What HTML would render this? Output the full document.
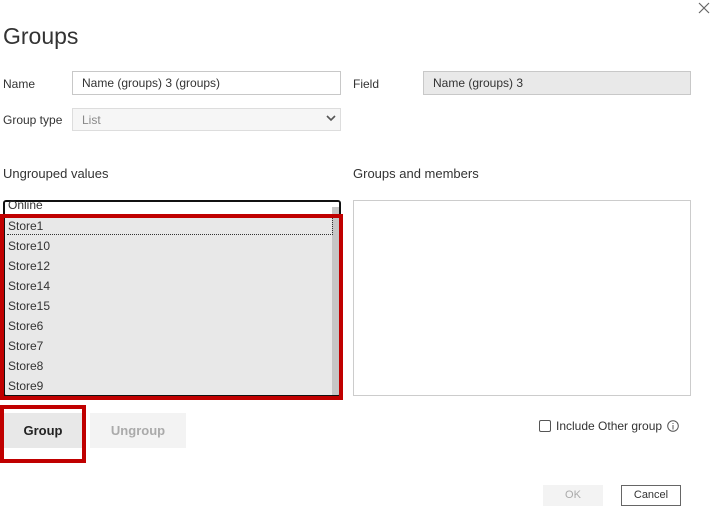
<!DOCTYPE html>
<html><head><style>
body{margin:0;width:711px;height:525px;background:#fff;font-family:"Liberation Sans",sans-serif;color:#333;position:relative;overflow:hidden}
.a{position:absolute}
.lbl{font-size:12px;color:#333}
.inp{border:1px solid #c8c8c8;box-sizing:border-box;font-size:12px;padding:0 9px;line-height:22px}
.item{position:absolute;left:8px;font-size:12px;color:#333}
</style></head><body>
<div class="a" style="left:3px;top:23px;font-size:23px;color:#333;font-weight:300">Groups</div>
<svg class="a" style="left:698px;top:2px" width="12" height="12"><path d="M1 1L11 11M11 1L1 11" stroke="#666" stroke-width="1.2"/></svg>
<div class="a lbl" style="left:3px;top:77px">Name</div>
<div class="a inp" style="left:72px;top:71px;width:269px;height:24px;color:#333">Name (groups) 3 (groups)</div>
<div class="a lbl" style="left:353px;top:77px">Field</div>
<div class="a inp" style="left:423px;top:71px;width:268px;height:24px;background:#e9e9e9">Name (groups) 3</div>
<div class="a lbl" style="left:3px;top:113px">Group type</div>
<div class="a inp" style="left:72px;top:108px;width:269px;height:23px;background:#f6f6f6;color:#888;border-color:#ddd">List</div>
<svg class="a" style="left:326px;top:115px" width="10" height="8"><path d="M1 1L5 5L9 1" stroke="#555" stroke-width="1.6" fill="none"/></svg>
<div class="a" style="left:3px;top:166px;font-size:13px">Ungrouped values</div>
<div class="a" style="left:353px;top:166px;font-size:13px">Groups and members</div>
<div class="a" style="left:3px;top:200px;width:338px;height:197px;border:2px solid #111;border-radius:3px;box-sizing:border-box;background:#e8e8e8;overflow:hidden">
<div class="a" style="left:0;top:0;width:334px;height:15px;background:#fff"></div>
<div class="a" style="left:327px;top:5px;width:7px;height:190px;background:#c6c6c6"></div>
<div class="a" style="left:2px;top:16px;width:325px;height:16px;border-bottom:1px dotted #333;border-right:1px dotted #333"></div>
</div>
<div class="item" style="top:198px">Online</div>
<div class="item" style="top:219px">Store1</div>
<div class="item" style="top:239px">Store10</div>
<div class="item" style="top:259px">Store12</div>
<div class="item" style="top:279px">Store14</div>
<div class="item" style="top:299px">Store15</div>
<div class="item" style="top:319px">Store6</div>
<div class="item" style="top:339px">Store7</div>
<div class="item" style="top:359px">Store8</div>
<div class="item" style="top:379px">Store9</div>
<div class="a" style="left:0;top:214px;width:343px;height:186px;border:4px solid #c00000;box-sizing:border-box"></div>
<div class="a" style="left:353px;top:200px;width:338px;height:196px;border:1px solid #ccc;box-sizing:border-box"></div>
<div class="a" style="left:4px;top:413px;width:78px;height:35px;background:#e8e8e8;font-size:13px;font-weight:bold;color:#222;text-align:center;line-height:35px">Group</div>
<div class="a" style="left:0;top:405px;width:86px;height:58px;border:4px solid #c00000;box-sizing:border-box"></div>
<div class="a" style="left:90px;top:413px;width:96px;height:35px;background:#f3f3f3;font-size:13px;font-weight:bold;color:#aaa;text-align:center;line-height:35px">Ungroup</div>
<div class="a" style="left:539px;top:420px;width:12px;height:12px;border:1px solid #555;border-radius:2px;box-sizing:border-box"></div>
<div class="a" style="left:556px;top:419px;font-size:12px">Include Other group</div>
<svg class="a" style="left:667px;top:420px" width="12" height="12"><circle cx="6" cy="6" r="5.3" fill="none" stroke="#555"/><path d="M6 5V9.5M6 3v1" stroke="#555"/></svg>
<div class="a" style="left:543px;top:485px;width:60px;height:21px;background:#f3f3f3;font-size:11px;color:#aaa;text-align:center;line-height:21px">OK</div>
<div class="a" style="left:621px;top:485px;width:60px;height:21px;border:1px solid #666;box-sizing:border-box;font-size:11px;color:#333;text-align:center;line-height:19px">Cancel</div>
</body></html>
